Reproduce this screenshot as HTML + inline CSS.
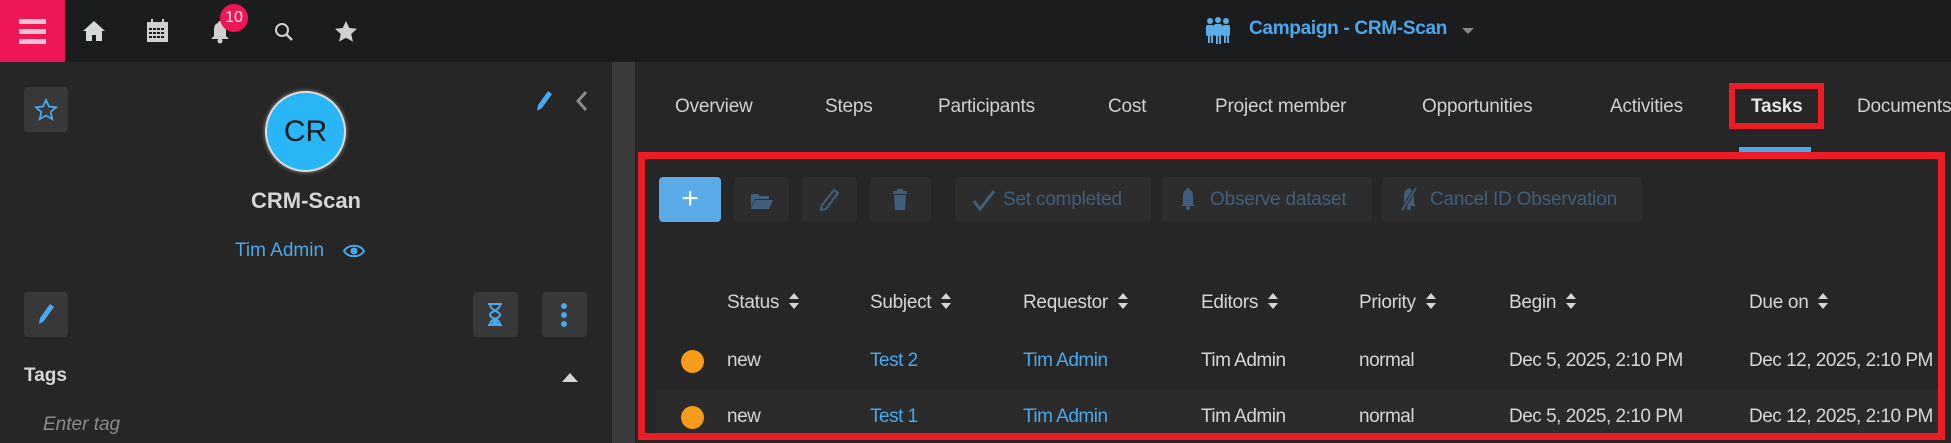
<!DOCTYPE html>
<html><head><meta charset="utf-8"><style>
*{box-sizing:border-box;margin:0;padding:0}
body{width:1951px;height:443px;overflow:hidden;background:#262626;font-family:"Liberation Sans",sans-serif;color:#d6d6d6;position:relative}
.a{position:absolute}
.top{left:0;top:0;width:1951px;height:62px;background:#1b1c1e}
.btn{position:absolute;background:#383838;border-radius:4px}
.tab{position:absolute;top:96px;font-size:19px;color:#d0d0d0;letter-spacing:-0.2px}
.tb{position:absolute;top:177px;height:45px;background:#2d2d2d;border-radius:4px;color:#3f5f7c;font-size:19px;line-height:45px;white-space:nowrap;letter-spacing:-0.2px}
.th{position:absolute;top:292px;font-size:19px;color:#d6d6d6;letter-spacing:-0.3px}
.td{position:absolute;font-size:19px;color:#d6d6d6;letter-spacing:-0.5px;white-space:nowrap}
.lk{color:#4aa8ec}
.sort{display:inline-block;vertical-align:middle;margin-left:10px;width:10px;height:16px;position:relative;top:-2px}
</style></head><body>
<div class="a top"></div>
<div class="a" style="left:0;top:0;width:65px;height:62px;background:#ef1656"></div>
<div class="a" style="left:19px;top:19px;width:27px;height:5px;background:#f3c0cf"></div>
<div class="a" style="left:19px;top:29px;width:27px;height:5px;background:#f3c0cf"></div>
<div class="a" style="left:19px;top:39px;width:27px;height:5px;background:#f3c0cf"></div>
<svg class="a" style="left:82px;top:20px" width="24" height="22" viewBox="0 0 24 22"><path d="M12 1L1 11h3v10h6v-6h4v6h6V11h3z" fill="#d8d8d8"/></svg>
<svg class="a" style="left:146px;top:19px" width="23" height="24" viewBox="0 0 23 24"><rect x="1" y="3" width="21" height="20" fill="#d0d0d0"/><g fill="#1b1c1e"><rect x="3" y="9" width="3" height="2"/><rect x="7" y="9" width="3" height="2"/><rect x="11" y="9" width="3" height="2"/><rect x="15" y="9" width="3" height="2"/><rect x="3" y="13" width="3" height="2"/><rect x="7" y="13" width="3" height="2"/><rect x="11" y="13" width="3" height="2"/><rect x="15" y="13" width="3" height="2"/><rect x="3" y="17" width="3" height="2"/><rect x="7" y="17" width="3" height="2"/><rect x="11" y="17" width="3" height="2"/><rect x="15" y="17" width="3" height="2"/></g><rect x="5" y="0" width="2" height="5" fill="#d0d0d0"/><rect x="16" y="0" width="2" height="5" fill="#d0d0d0"/></svg>
<svg class="a" style="left:210px;top:20px" width="20" height="24" viewBox="0 0 20 24"><path d="M10 1c-1 0-2 1-2 2C4 4 4 8 4 12v4l-3 3h18l-3-3v-4c0-4 0-8-4-9 0-1-1-2-2-2z" fill="#d0d0d0"/><circle cx="10" cy="21" r="2.5" fill="#d0d0d0"/></svg>
<div class="a" style="left:220px;top:4px;width:28px;height:28px;border-radius:50%;background:#ef1656;color:#f2f2f2;font-size:16px;text-align:center;line-height:28px">10</div>
<svg class="a" style="left:274px;top:22px" width="20" height="20" viewBox="0 0 20 20"><circle cx="8" cy="8" r="6" fill="none" stroke="#d0d0d0" stroke-width="2"/><path d="M12.5 12.5L18 18" stroke="#d0d0d0" stroke-width="2.5"/></svg>
<svg class="a" style="left:334px;top:20px" width="24" height="23" viewBox="0 0 24 23"><path d="M12 1l3.3 7 7.7.8-5.8 5.2 1.7 7.6L12 17.7l-6.9 3.9 1.7-7.6L1 8.8 8.7 8z" fill="#d0d0d0"/></svg>
<svg class="a" style="left:1205px;top:17px" width="26" height="27" viewBox="0 0 26 27"><g fill="#5aaee8"><circle cx="5" cy="4" r="3"/><circle cx="13" cy="3" r="3"/><circle cx="21" cy="4" r="3"/><rect x="1" y="8" width="8" height="11" rx="2"/><rect x="9" y="7" width="8" height="12" rx="2"/><rect x="17" y="8" width="8" height="11" rx="2"/><rect x="3" y="18" width="2" height="8"/><rect x="6" y="18" width="2" height="8"/><rect x="11" y="18" width="2" height="9"/><rect x="14" y="18" width="2" height="9"/><rect x="19" y="18" width="2" height="8"/><rect x="22" y="18" width="2" height="8"/></g></svg>
<div class="a" style="left:1249px;top:18px;font-size:19px;color:#4aa8ec;font-weight:bold;letter-spacing:-0.3px">Campaign - CRM-Scan</div>
<svg class="a" style="left:1462px;top:27px" width="12" height="8"><path d="M0 1h12L6 7z" fill="#888"/></svg>

<div class="a" style="left:612px;top:62px;width:23px;height:381px;background:#3b3b3b"></div>
<div class="btn" style="left:24px;top:87px;width:44px;height:45px"></div>
<svg class="a" style="left:34px;top:98px" width="24" height="23" viewBox="0 0 24 23"><path d="M12 2l3 6.5 7 .8-5.3 4.8 1.5 7L12 17.5l-6.2 3.6 1.5-7L2 9.3l7-.8z" fill="none" stroke="#4aa8ec" stroke-width="1.8"/></svg>
<div class="a" style="left:265px;top:91px;width:81px;height:81px;border-radius:50%;background:#29b6f6;border:2px solid #ddd;box-shadow:0 0 4px #999;text-align:center;line-height:77px;font-size:30px;color:#1a1a1a">CR</div>
<div class="a" style="left:206px;top:188px;width:200px;text-align:center;font-size:22px;font-weight:bold;color:#d6d6d6">CRM-Scan</div>
<div class="a" style="left:235px;top:240px;font-size:19px;color:#4aa8ec">Tim Admin</div>
<svg class="a" style="left:343px;top:244px" width="22" height="14" viewBox="0 0 22 14"><path d="M1 7C5 0 17 0 21 7 17 14 5 14 1 7z" fill="none" stroke="#4aa8ec" stroke-width="2"/><circle cx="11" cy="7" r="3.5" fill="#4aa8ec"/></svg>
<svg class="a" style="left:535px;top:90px" width="18" height="22" viewBox="0 0 18 22"><path d="M13 1l4 3-10 14-5 3 1-6z" fill="#4aa8ec"/></svg>
<svg class="a" style="left:575px;top:90px" width="14" height="22" viewBox="0 0 14 22"><path d="M11 2L3 11l8 9" fill="none" stroke="#8a8a8a" stroke-width="3"/></svg>
<div class="btn" style="left:24px;top:292px;width:44px;height:45px"></div>
<svg class="a" style="left:37px;top:303px" width="18" height="22" viewBox="0 0 18 22"><path d="M13 1l4 3-10 14-5 3 1-6z" fill="#4aa8ec"/></svg>
<div class="btn" style="left:473px;top:292px;width:45px;height:45px"></div>
<svg class="a" style="left:486px;top:302px" width="18" height="25" viewBox="0 0 18 25"><path d="M2 2h14M2 23h14M4 2c0 7 10 7 10 11S4 16 4 23M14 2c0 7-10 7-10 11s10 3 10 10" fill="none" stroke="#4aa8ec" stroke-width="2"/><path d="M5 22l4-5 4 5z" fill="#4aa8ec"/></svg>
<div class="btn" style="left:542px;top:292px;width:45px;height:45px"></div>
<div class="a" style="left:561px;top:303px;width:6px;height:6px;border-radius:50%;background:#4aa8ec"></div>
<div class="a" style="left:561px;top:312px;width:6px;height:6px;border-radius:50%;background:#4aa8ec"></div>
<div class="a" style="left:561px;top:321px;width:6px;height:6px;border-radius:50%;background:#4aa8ec"></div>
<div class="a" style="left:24px;top:365px;font-size:19px;font-weight:bold;color:#d6d6d6">Tags</div>
<svg class="a" style="left:562px;top:372px" width="16" height="10"><path d="M0 10L8 1l8 9z" fill="#d6d6d6"/></svg>
<div class="a" style="left:43px;top:414px;font-size:19px;font-style:italic;color:#8a8a8a">Enter tag</div>

<div class="tab" style="left:675px">Overview</div>
<div class="tab" style="left:825px">Steps</div>
<div class="tab" style="left:938px">Participants</div>
<div class="tab" style="left:1108px">Cost</div>
<div class="tab" style="left:1215px">Project member</div>
<div class="tab" style="left:1422px">Opportunities</div>
<div class="tab" style="left:1610px">Activities</div>
<div class="tab" style="left:1751px;font-weight:bold;color:#e6e6e6">Tasks</div>
<div class="tab" style="left:1857px">Documents</div>
<div class="a" style="left:1729px;top:83px;width:95px;height:46px;border:6px solid #ec1c24"></div>
<div class="a" style="left:1739px;top:147px;width:72px;height:5px;background:#4aa8ec"></div>

<div class="a" style="left:656px;top:390px;width:1283px;height:44px;background:#2b2b2b"></div>
<div class="a" style="left:638px;top:152px;width:1307px;height:288px;border:7px solid #ec1c24"></div>
<div class="tb" style="left:659px;width:62px;background:#5aabe8;color:#fff;text-align:center;font-size:30px;line-height:43px">+</div>
<div class="tb" style="left:734px;width:55px"></div>
<svg class="a" style="left:750px;top:192px" width="24" height="17" viewBox="0 0 24 17"><path d="M1 2h7l2 2h9v3H5L1 16z M5 8h18l-4 9H1z" fill="#3f5f7c"/></svg>
<div class="tb" style="left:802px;width:55px"></div>
<svg class="a" style="left:819px;top:189px" width="20" height="22" viewBox="0 0 20 22"><path d="M15 1l4 3-12 16-5 1 1-5z" fill="none" stroke="#3f5f7c" stroke-width="2"/></svg>
<div class="tb" style="left:870px;width:61px"></div>
<svg class="a" style="left:892px;top:189px" width="16" height="21" viewBox="0 0 16 21"><rect x="1" y="2" width="14" height="3" fill="#3f5f7c"/><rect x="5" y="0" width="6" height="2" fill="#3f5f7c"/><path d="M2 6h12l-1 15H3z" fill="#3f5f7c"/></svg>
<div class="tb" style="left:955px;width:196px;padding-left:48px">Set completed</div>
<svg class="a" style="left:972px;top:189px" width="24" height="22" viewBox="0 0 24 22"><path d="M2 12l6 8L22 2" fill="none" stroke="#3f5f7c" stroke-width="3"/></svg>
<div class="tb" style="left:1162px;width:210px;padding-left:48px">Observe dataset</div>
<svg class="a" style="left:1180px;top:187px" width="16" height="24" viewBox="0 0 16 24"><path d="M8 1c-1 0-2 1-2 2C3 4 3 8 3 12v5l-2 2h14l-2-2v-5c0-4 0-8-3-9 0-1-1-2-2-2z" fill="#3f5f7c"/><circle cx="8" cy="21" r="2" fill="#3f5f7c"/></svg>
<div class="tb" style="left:1382px;width:260px;padding-left:48px">Cancel ID Observation</div>
<svg class="a" style="left:1399px;top:187px" width="20" height="24" viewBox="0 0 20 24"><path d="M10 1c-1 0-2 1-2 2C5 4 5 8 5 12v5l-2 2h14l-2-2v-5c0-4 0-8-3-9 0-1-1-2-2-2z" fill="#3f5f7c"/><circle cx="10" cy="21" r="2" fill="#3f5f7c"/><path d="M17 1L3 23" stroke="#2d2d2d" stroke-width="4"/><path d="M17 1L3 23" stroke="#3f5f7c" stroke-width="2"/></svg>

<svg width="0" height="0" style="position:absolute"><defs><g id="s"><path d="M5 0l5 6H0z M5 16l5-6H0z" fill="#d6d6d6"/></g></defs></svg>
<div class="th" style="left:727px">Status<svg class="sort"><use href="#s"/></svg></div>
<div class="th" style="left:870px">Subject<svg class="sort"><use href="#s"/></svg></div>
<div class="th" style="left:1023px">Requestor<svg class="sort"><use href="#s"/></svg></div>
<div class="th" style="left:1201px">Editors<svg class="sort"><use href="#s"/></svg></div>
<div class="th" style="left:1359px">Priority<svg class="sort"><use href="#s"/></svg></div>
<div class="th" style="left:1509px">Begin<svg class="sort"><use href="#s"/></svg></div>
<div class="th" style="left:1749px">Due on<svg class="sort"><use href="#s"/></svg></div>

<div class="a" style="left:681px;top:350px;width:23px;height:23px;border-radius:50%;background:#f59c1a"></div>
<div class="td" style="left:727px;top:350px">new</div>
<div class="td lk" style="left:870px;top:350px">Test 2</div>
<div class="td lk" style="left:1023px;top:350px">Tim Admin</div>
<div class="td" style="left:1201px;top:350px">Tim Admin</div>
<div class="td" style="left:1359px;top:350px">normal</div>
<div class="td" style="left:1509px;top:350px">Dec 5, 2025, 2:10 PM</div>
<div class="td" style="left:1749px;top:350px">Dec 12, 2025, 2:10 PM</div>

<div class="a" style="left:681px;top:406px;width:23px;height:23px;border-radius:50%;background:#f59c1a"></div>
<div class="td" style="left:727px;top:406px">new</div>
<div class="td lk" style="left:870px;top:406px">Test 1</div>
<div class="td lk" style="left:1023px;top:406px">Tim Admin</div>
<div class="td" style="left:1201px;top:406px">Tim Admin</div>
<div class="td" style="left:1359px;top:406px">normal</div>
<div class="td" style="left:1509px;top:406px">Dec 5, 2025, 2:10 PM</div>
<div class="td" style="left:1749px;top:406px">Dec 12, 2025, 2:10 PM</div>
</body></html>
